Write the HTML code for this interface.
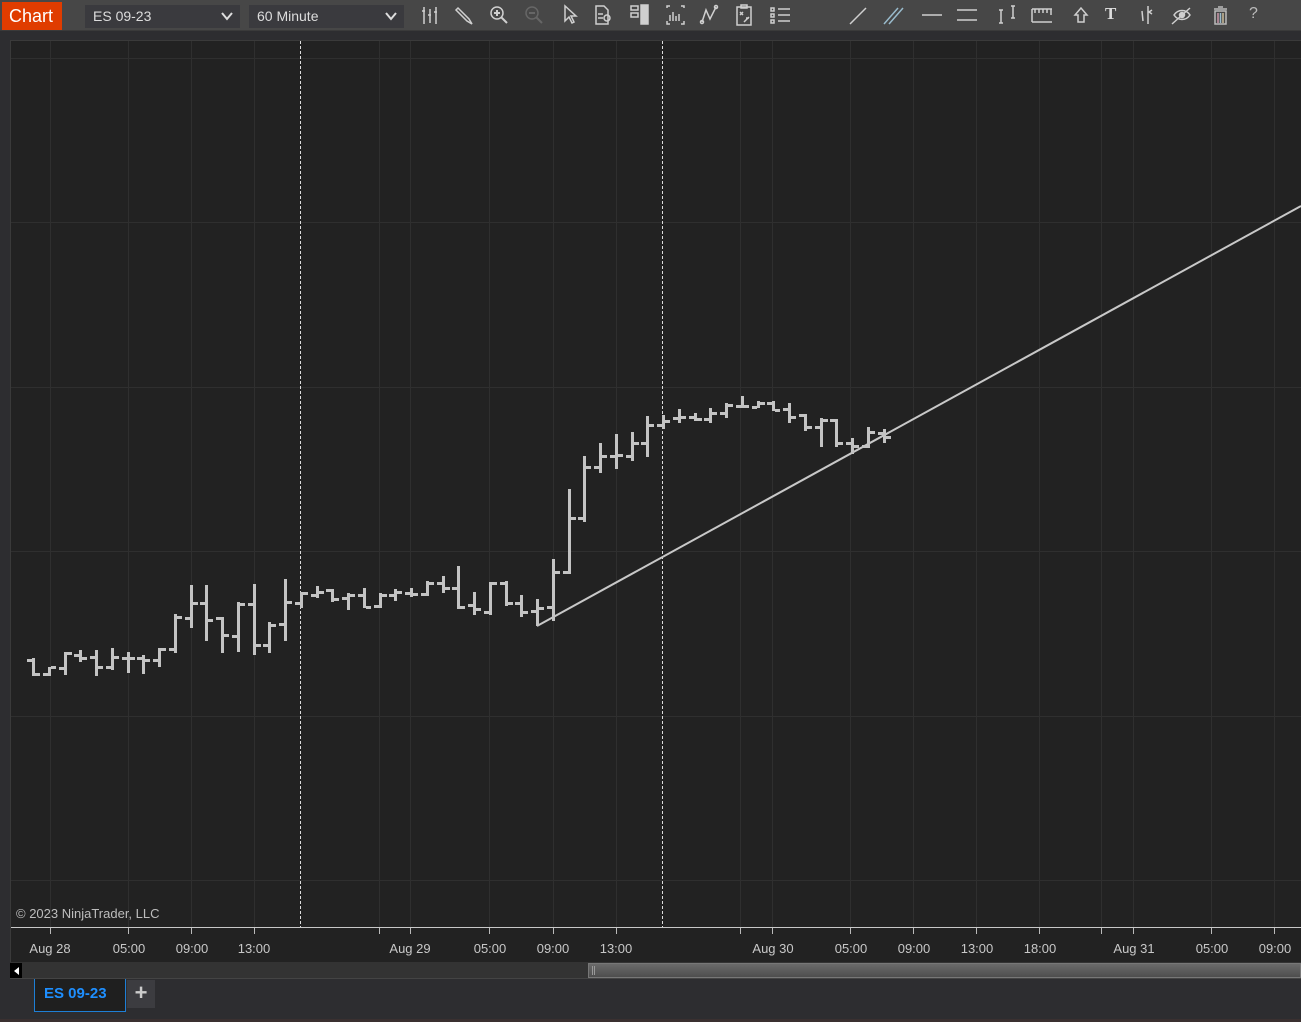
<!DOCTYPE html>
<html><head><meta charset="utf-8">
<style>
*{margin:0;padding:0;box-sizing:border-box}
body{width:1301px;height:1022px;background:#2d2d30;overflow:hidden;font-family:"Liberation Sans",sans-serif;position:relative}
#tb{position:absolute;left:0;top:0;width:1301px;height:31px;background:#474747;border-bottom:1px solid #3a3a3a}
#chartlbl{position:absolute;left:2px;top:2px;width:60px;height:28px;background:#e03c00;color:#fff;font-size:18px;line-height:28px;padding-left:7px}
.dd{position:absolute;top:5px;height:23px;background:#3a3a3e;color:#ddd;font-size:14px;line-height:23px;padding-left:8px}
.dd svg{position:absolute;right:7px;top:7px}
#chart{position:absolute;left:10px;top:40px;width:1291px;height:923px;background:#222;border-left:1px solid #3a3a3a;border-top:1px solid #3a3a3a}
.lbl{position:absolute;top:941px;color:#c8c8c8;font-size:13px;transform:translateX(-50%);white-space:nowrap}
</style></head><body>
<div id="tb">
<div id="chartlbl">Chart</div>
<div class="dd" style="left:85px;width:155px">ES 09-23<svg width="12" height="9"><path d="M1 1 L6 7 L11 1" stroke="#ddd" stroke-width="2" fill="none"/></svg></div>
<div class="dd" style="left:249px;width:155px">60 Minute<svg width="12" height="9"><path d="M1 1 L6 7 L11 1" stroke="#ddd" stroke-width="2" fill="none"/></svg></div>
<svg width="1301" height="31" style="position:absolute;left:0;top:0" fill="none" stroke="#cfcfcf" stroke-width="1.5">
<path d="M424 7v17M430 9v14M436 7v17M422 11h3M428 15h3M434 12h3"/>
<path d="M458 8l11 11 3 5-5-3-11-11z M461 11l8 8"/>
<circle cx="497" cy="13" r="6"/><path d="M501 17l6 6M494 13h6M497 10v6" stroke-width="2"/>
<g stroke="#666"><circle cx="532" cy="13" r="6"/><path d="M536 17l6 6M529 13h6" stroke-width="2"/></g>
<path d="M565 6v15l4-4 3 6 2-1-3-6h5z"/>
<path d="M596 6h8l4 4v14h-12z M598 14h5M598 18h5"/><circle cx="607" cy="18" r="3"/>
<path d="M631 6h7v4h-7zM631 13h7v4h-7z"/><rect x="641" y="5" width="7" height="19" fill="#cfcfcf"/>
<path d="M667 8v-2h3M681 6h3v2M667 21v3h3M681 24h3v-3M670 21v-6M673 21v-9M676 21v-5M679 21v-7" />
<path d="M702 22l4-12 4 9 6-12"/><circle cx="702" cy="22" r="1.5"/><circle cx="716" cy="7" r="1.5"/>
<path d="M737 7h14v18h-14zM741 5h6v3h-6zM740 12l3 3M743 12l-3 3M744 22l5-5M746 18h3"/>
<path d="M771 8h3v3h-3zM771 14h3v3h-3zM771 20h3v3h-3zM778 9h12M778 15h12M778 21h12"/>
<path d="M850 24l16-16"/>
<path d="M884 24l14-16M889 24l14-16" stroke="#9bc"/>
<path d="M922 15h20"/>
<path d="M957 10h20M957 20h20"/>
<path d="M999 10h4M1001 10v13M999 23h4M1011 6h4M1013 6v12M1011 18h4"/>
<path d="M1032 9h20M1032 22h20M1035 9v4M1039 9v4M1043 9v4M1047 9v4M1051 9v6M1032 9v13"/>
<path d="M1081 8l-6 7h3v7h6v-7h3z"/>
<path d="M1142 11l1 10M1148 6v18M1152 10l-3 2 3 2"/>
<path d="M1174 15c4-6 12-6 16 0c-4 6-12 6-16 0zM1172 24l18-16"/><circle cx="1182" cy="15" r="2.5" fill="#cfcfcf"/>
<path d="M1214 9h13M1218 7h5M1215 11h11v13h-11z" stroke="#bbb"/>
<path d="M1218 13v10" stroke="#c9a"/><path d="M1220.5 13v10" stroke="#9bc"/><path d="M1223 13v10" stroke="#cb9"/>
</svg>
<div style="position:absolute;left:1105px;top:4px;color:#ddd;font:bold 17px 'Liberation Serif',serif">T</div>
<div style="position:absolute;left:1249px;top:5px;color:#bbb;font-size:16px">?</div>
</div>
<div id="chart"></div>
<svg id="plot" width="1301" height="1022" style="position:absolute;left:0;top:0"></svg>
<div style="position:absolute;left:16px;top:906px;color:#bdbdbd;font-size:13px">© 2023 NinjaTrader, LLC</div>
<div class="lbl" style="left:50px">Aug 28</div>
<div class="lbl" style="left:129px">05:00</div>
<div class="lbl" style="left:192px">09:00</div>
<div class="lbl" style="left:254px">13:00</div>
<div class="lbl" style="left:410px">Aug 29</div>
<div class="lbl" style="left:490px">05:00</div>
<div class="lbl" style="left:553px">09:00</div>
<div class="lbl" style="left:616px">13:00</div>
<div class="lbl" style="left:773px">Aug 30</div>
<div class="lbl" style="left:851px">05:00</div>
<div class="lbl" style="left:914px">09:00</div>
<div class="lbl" style="left:977px">13:00</div>
<div class="lbl" style="left:1040px">18:00</div>
<div class="lbl" style="left:1134px">Aug 31</div>
<div class="lbl" style="left:1212px">05:00</div>
<div class="lbl" style="left:1275px">09:00</div>
<div style="position:absolute;left:10px;top:962px;width:1291px;height:17px;background:#333;border-bottom:1px solid #444"></div>
<div style="position:absolute;left:10px;top:963px;width:12px;height:15px;background:#000"></div>
<svg width="8" height="8" style="position:absolute;left:13px;top:967px"><path d="M6 0v8L1 4z" fill="#fff"/></svg>
<div style="position:absolute;left:588px;top:963px;width:713px;height:15px;background:linear-gradient(#6a6a6a,#4e4e4e);border:1px solid #777"></div>
<div style="position:absolute;left:592px;top:966px;width:3px;height:9px;border-left:1px solid #999;border-right:1px solid #999"></div>
<div style="position:absolute;left:34px;top:979px;width:92px;height:33px;background:#1f1f1f;border:1px solid #1e7fd6;border-top:none;color:#1e8fff;font-weight:bold;font-size:15px;line-height:30px;padding-left:9px">ES 09-23</div>
<div style="position:absolute;left:127px;top:980px;width:28px;height:28px;background:#3c3c40;color:#ccc;font-size:22px;font-weight:bold;line-height:26px;text-align:center">+</div>
<div style="position:absolute;left:0;top:1019px;width:1301px;height:3px;background:#3a3030"></div>
<script>
var s='';
var gx=[50,128,191,254,379,410,489,553,616,740,772,850,913,976,1039,1101,1133,1211,1274];
gx.forEach(function(x){s+='<line x1="'+(x+.5)+'" y1="41" x2="'+(x+.5)+'" y2="927" stroke="#2f2f2f"/>';
 s+='<line x1="'+(x+.5)+'" y1="928" x2="'+(x+.5)+'" y2="934" stroke="#bbb"/>';});
[58,222,387,551,716,880].forEach(function(y){s+='<line x1="11" y1="'+(y+.5)+'" x2="1301" y2="'+(y+.5)+'" stroke="#2f2f2f"/>';});
[300,662].forEach(function(x){s+='<line x1="'+(x+.5)+'" y1="41" x2="'+(x+.5)+'" y2="927" stroke="#ddd" stroke-dasharray="3,2"/>';});
s+='<line x1="11" y1="927.5" x2="1301" y2="927.5" stroke="#c8c8c8"/>';
var B=[[658,676,660,674],[667,676,674,667],[652,675,668,653],[650,662,655,658],[650,676,657,667],[648,670,667,657],[652,673,658,658],[655,674,658,660],[648,667,660,649],[614,653,649,617],[585,628,618,603],[585,641,603,620],[617,653,618,635],[602,652,636,604],[584,655,604,645],[622,653,645,625],[579,641,624,602],
[592,608,603,593],[586,598,595,592],[589,602,590,599],[593,610,598,595],[588,608,595,607],[593,608,606,595],[589,601,595,592],[588,597,593,594],[581,596,594,583],[576,593,583,588],[566,609,588,607],[592,615,605,609],[582,615,612,583],[581,606,583,603],[595,617,603,612],[599,626,611,608],[559,621,607,572],
[489,574,572,518],[456,522,518,467],[443,473,467,456],[434,469,456,455],[432,461,456,443],[416,457,443,425],[415,429,425,421],[409,423,418,417],[413,421,417,419],[408,423,419,413],[403,418,413,405],[396,408,406,406],[401,408,407,403],[401,411,403,410],[403,423,409,417],[414,431,415,427],[418,447,427,420],[419,447,420,443],[438,454,443,446],[427,448,446,432],[429,443,433,437]];
s+='<line x1="537" y1="626" x2="1301" y2="206" stroke="#c8c8c8" stroke-width="2"/>';
B.forEach(function(b,i){var x=Math.round(33+15.75*i);
 s+='<rect x="'+(x-1)+'" y="'+b[0]+'" width="3" height="'+(b[1]-b[0])+'" fill="#c3c3c3"/>';
 s+='<rect x="'+(x-6)+'" y="'+(b[2]-1)+'" width="5" height="3" fill="#c3c3c3"/>';
 s+='<rect x="'+(x+2)+'" y="'+(b[3]-1)+'" width="5" height="3" fill="#c3c3c3"/>';});
document.getElementById('plot').innerHTML=s;
</script>
</body></html>
